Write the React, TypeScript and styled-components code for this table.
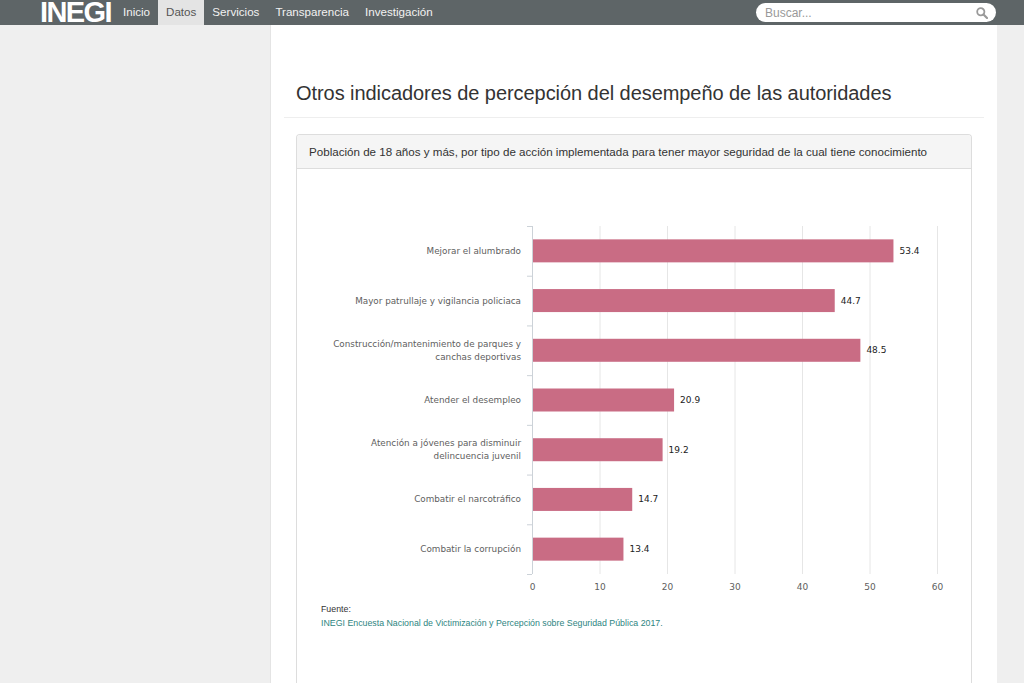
import React from "react";
import styled, { createGlobalStyle } from "styled-components";

const Global = createGlobalStyle`
  html, body { margin: 0; padding: 0; }
  body {
    background: #efefef;
    font-family: "Liberation Sans", Arial, sans-serif;
    color: #333;
  }
`;

const NavBar = styled.header`
  height: 25px;
  background: #5e6567;
`;

const NavInner = styled.div`
  width: 970px;
  margin: 0 auto;
  height: 25px;
  display: flex;
  align-items: center;
`;

const Logo = styled.div`
  font-family: "Liberation Sans", Arial, sans-serif;
  font-weight: 900;
  font-size: 29px;
  letter-spacing: -1.6px;
  line-height: 25px;
  color: #fff;
  margin-left: 13px;
  margin-right: 4px;
`;

const MenuItem = styled.a<{ $active?: boolean }>`
  display: block;
  height: 25px;
  line-height: 23px;
  padding: 0 8px;
  font-size: 11.6px;
  color: ${(p) => (p.$active ? "#555" : "#f2f2f2")};
  background: ${(p) => (p.$active ? "#e4e4e4" : "transparent")};
  text-decoration: none;
`;

const Search = styled.div`
  margin-left: auto;
  margin-right: 1px;
  width: 240px;
  height: 19px;
  background: #fff;
  border-radius: 10px;
  display: flex;
  align-items: center;
  padding: 0 8px 0 9px;
  box-sizing: border-box;
  font-size: 12px;
  color: #999;
`;

const Placeholder = styled.span`
  flex: 1;
`;

const Main = styled.div`
  width: 970px;
  margin: 0 auto;
  display: flex;
  min-height: calc(100vh - 25px);
`;

const Sidebar = styled.aside`
  width: 243px;
  flex: none;
`;

const Content = styled.main`
  flex: 1;
  background: #fff;
  border-left: 1px solid #e4e4e4;
  padding: 56px 13px 0;
`;

const Title = styled.h2`
  margin: 0;
  padding-left: 12px;
  font-size: 20px;
  letter-spacing: -0.06px;
  line-height: 24px;
  font-weight: normal;
  color: #333;
`;

const Rule = styled.hr`
  margin: 12px 0 0;
  border: 0;
  border-top: 1px solid #eee;
`;

const Panel = styled.section`
  margin: 16px 12px 0;
  border: 1px solid #ddd;
  border-bottom: 0;
  border-radius: 4px 4px 0 0;
  min-height: 560px;
`;

const PanelHeader = styled.div`
  height: 33px;
  line-height: 33px;
  padding: 0 12px;
  background: #f5f5f5;
  border-bottom: 1px solid #ddd;
  border-radius: 3px 3px 0 0;
  font-size: 11.6px;
  color: #333;
`;

const ChartSvg = styled.svg`
  display: block;
  font-family: "DejaVu Sans", Verdana, sans-serif;
`;

const Source = styled.div`
  padding-left: 24px;
  font-size: 8.8px;
  line-height: 14px;
  margin-top: 1px;
`;

const SourceLabel = styled.div`
  color: #333;
`;

const SourceLink = styled.a`
  color: #2e857f;
  text-decoration: none;
`;

const data: { label: string[]; value: number }[] = [
  { label: ["Mejorar el alumbrado"], value: 53.4 },
  { label: ["Mayor patrullaje y vigilancia policiaca"], value: 44.7 },
  { label: ["Construcción/mantenimiento de parques y", "canchas deportivas"], value: 48.5 },
  { label: ["Atender el desempleo"], value: 20.9 },
  { label: ["Atención a jóvenes para disminuir", "delincuencia juvenil"], value: 19.2 },
  { label: ["Combatir el narcotráfico"], value: 14.7 },
  { label: ["Combatir la corrupción"], value: 13.4 },
];

const X0 = 235;
const SCALE = 6.75;
const TOP = 57;
const BOTTOM = 405;
const STEP = (BOTTOM - TOP) / data.length;
const BAR_H = 23;

function Chart() {
  const ticks = [0, 10, 20, 30, 40, 50, 60];
  return (
    <ChartSvg width={674} height={432}>
      {ticks.map((t) => (
        <line
          key={"g" + t}
          x1={X0 + t * SCALE + 0.5}
          x2={X0 + t * SCALE + 0.5}
          y1={TOP}
          y2={BOTTOM}
          stroke={t === 0 ? "#ccd2d8" : "#e6e6e6"}
          strokeWidth={1}
        />
      ))}
      {Array.from({ length: data.length + 1 }).map((_, i) => (
        <line
          key={"t" + i}
          x1={X0 - 5}
          x2={X0}
          y1={TOP + i * STEP + 0.5}
          y2={TOP + i * STEP + 0.5}
          stroke="#ccd2d8"
        />
      ))}
      {data.map((d, i) => {
        const cy = TOP + STEP * i + STEP / 2;
        const w = d.value * SCALE;
        const lines = d.label;
        return (
          <g key={i}>
            <rect x={X0 + 1} y={cy - BAR_H / 2} width={w} height={BAR_H} fill="#c96c84" />
            <text x={X0 + 1 + w + 6} y={cy + 3} fontSize={9} fill="#222">
              {d.value.toFixed(1)}
            </text>
            {lines.map((l, j) => (
              <text
                key={j}
                x={224}
                y={cy + 3 + (j - (lines.length - 1) / 2) * 13}
                fontSize={8.8}
                fill="#606060"
                textAnchor="end"
              >
                {l}
              </text>
            ))}
          </g>
        );
      })}
      {ticks.map((t) => (
        <text
          key={"l" + t}
          x={X0 + t * SCALE + 0.5}
          y={421}
          fontSize={9}
          fill="#606060"
          textAnchor="middle"
        >
          {t}
        </text>
      ))}
    </ChartSvg>
  );
}

function SearchIcon() {
  return (
    <svg width="12" height="12" viewBox="0 0 12 12">
      <circle cx="4.8" cy="4.8" r="3.6" fill="none" stroke="#9a9a9a" strokeWidth="1.8" />
      <line x1="7.5" y1="7.5" x2="11" y2="11" stroke="#9a9a9a" strokeWidth="2.2" strokeLinecap="round" />
    </svg>
  );
}

export default function App() {
  return (
    <>
      <Global />
      <NavBar>
        <NavInner>
          <Logo>INEGI</Logo>
          <MenuItem href="#">Inicio</MenuItem>
          <MenuItem href="#" $active>
            Datos
          </MenuItem>
          <MenuItem href="#">Servicios</MenuItem>
          <MenuItem href="#">Transparencia</MenuItem>
          <MenuItem href="#">Investigación</MenuItem>
          <Search>
            <Placeholder>Buscar...</Placeholder>
            <SearchIcon />
          </Search>
        </NavInner>
      </NavBar>
      <Main>
        <Sidebar />
        <Content>
          <Title>Otros indicadores de percepción del desempeño de las autoridades</Title>
          <Rule />
          <Panel>
            <PanelHeader>
              Población de 18 años y más, por tipo de acción implementada para tener mayor seguridad de la cual tiene conocimiento
            </PanelHeader>
            <Chart />
            <Source>
              <SourceLabel>Fuente:</SourceLabel>
              <SourceLink href="#">
                INEGI Encuesta Nacional de Victimización y Percepción sobre Seguridad Pública 2017.
              </SourceLink>
            </Source>
          </Panel>
        </Content>
      </Main>
    </>
  );
}
